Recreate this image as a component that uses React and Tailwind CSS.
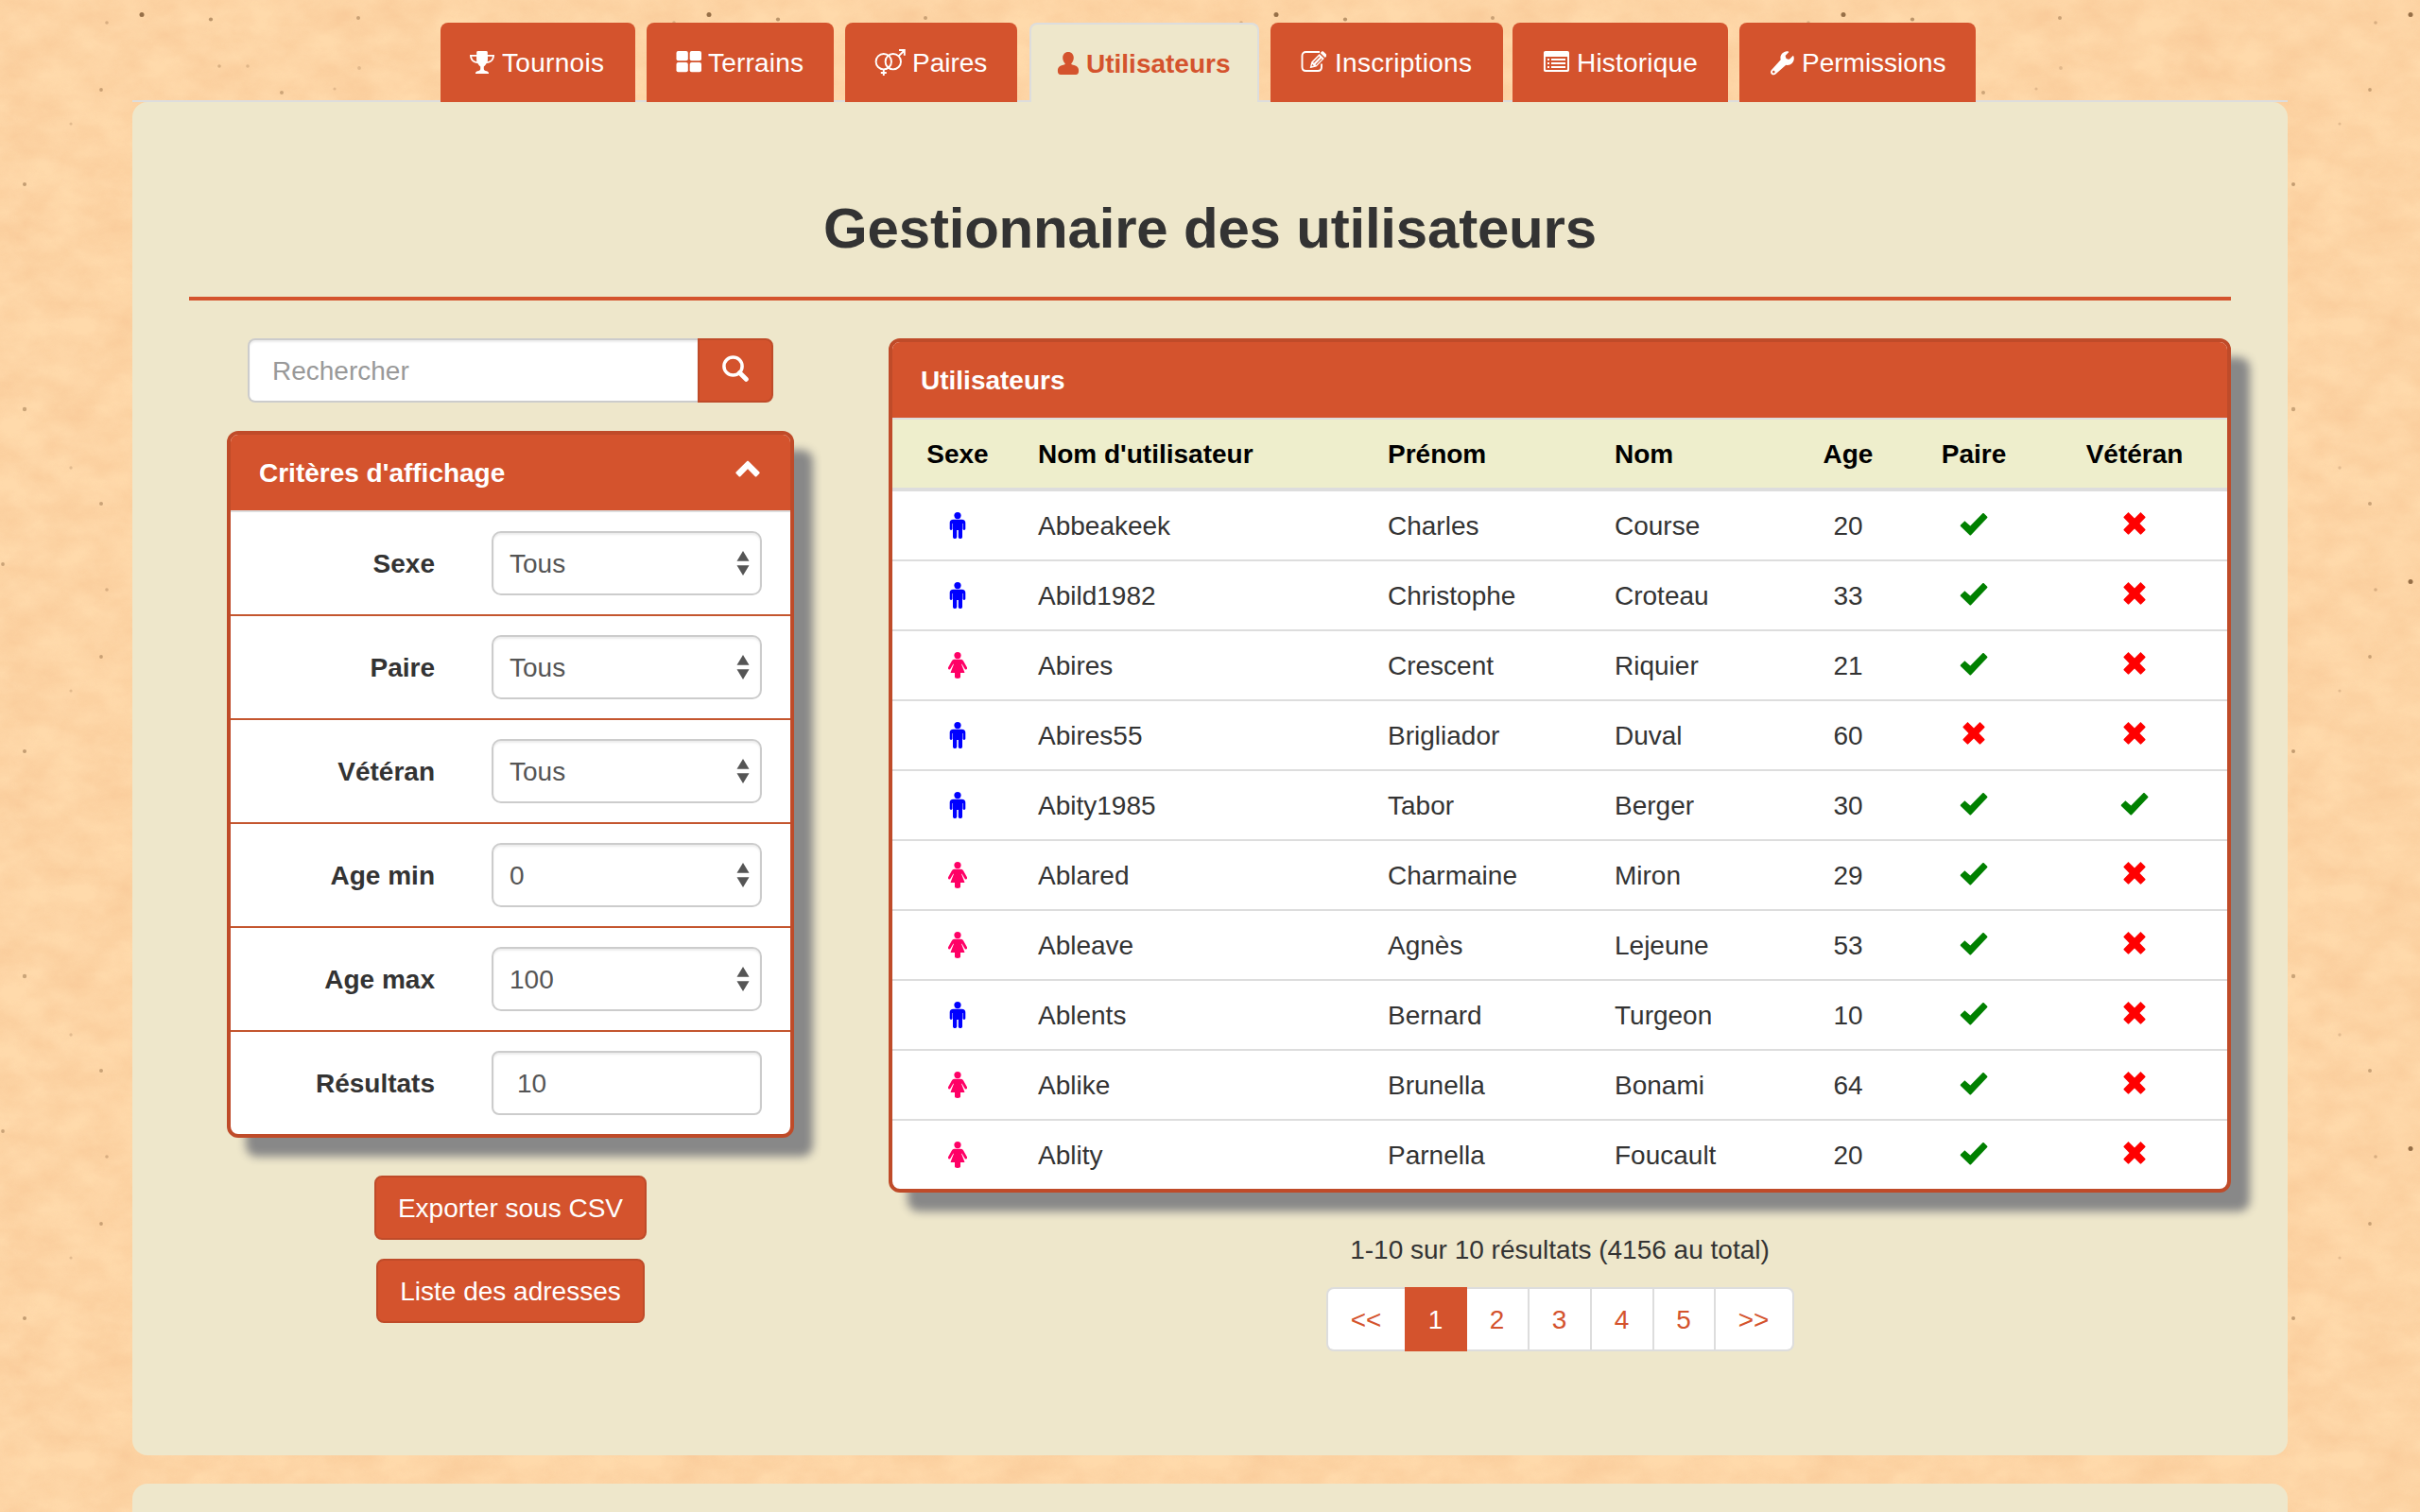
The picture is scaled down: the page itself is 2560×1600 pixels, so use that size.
import React from "react";

const Svg = ({ className, box, children }) => (
  <svg className={"block shrink-0 " + className} viewBox={box} fill="currentColor" aria-hidden="true">
    {children}
  </svg>
);

const Trophy = () => (
  <Svg className="h-7 w-7" box="0 0 28 28">
    <path d="M8.2 2.9C8.2 2.4 9.4 2 10.5 2h7c1.100 0 2.300.4 2.300.9V6h7.200c0 5.600-3.300 8.600-8.300 9.100-1 1.700-2.300 2.900-2.900 3.400v2.400c0 1.200 1.200 1.800 3.200 2.300 1.500.4 2 1.300 2 2.800H7c0-1.500.5-2.400 2-2.800 2-.5 3.200-1.100 3.200-2.300v-2.400c-.6-.5-1.900-1.700-2.900-3.400C4.300 14.600 1 11.600 1 6h7.200zM3 7.700c.4 3 2.200 5 5.300 5.500-.3-1.600-.3-3.600-.2-5.500zm22 0h-5.100c.1 1.900.1 3.900-.2 5.500 3.100-.5 4.900-2.500 5.300-5.500z" />
  </Svg>
);
const Grid = () => (
  <Svg className="h-7 w-7" box="0 0 28 28">
    <rect x="1.500" y="2" width="12.300" height="10.200" rx="2" />
    <rect x="15.700" y="2" width="12.300" height="10.200" rx="2" />
    <rect x="1.500" y="14" width="12.300" height="10.200" rx="2" />
    <rect x="15.700" y="14" width="12.300" height="10.200" rx="2" />
  </Svg>
);
const Couple = () => (
  <Svg className="h-7 w-[34px]" box="0 0 34 28">
    <g fill="none" stroke="currentColor" strokeWidth="1.900">
      <circle cx="10.800" cy="13.200" r="8.200" />
      <circle cx="20.800" cy="13.200" r="8.200" />
      <path d="M10.800 21.400V28M7.800 25h6M26.600 7.400 32 2M27 1h5.800v5.800" />
    </g>
  </Svg>
);
const User = () => (
  <Svg className="h-7 w-7" box="0 0 28 28">
    <path d="M15 2c3.500 0 5.800 2.700 5.800 6.100 0 2.300-.9 4.400-2.300 5.800-.4.500-.3 1 .3 1.300 1.600.6 3.600 1 5 1.900 1.600 1.100 2.300 2.700 2.300 4.900C26.100 24.900 25 26 23 26H7c-2 0-3.100-1.100-3.100-4 0-2.200.7-3.800 2.300-4.900 1.400-.9 3.400-1.300 5-1.900.6-.3.7-.8.3-1.300-1.400-1.400-2.300-3.500-2.300-5.800C9.200 4.700 11.500 2 15 2z" />
  </Svg>
);
const Edit = () => (
  <Svg className="h-7 w-7" box="0 0 28 28">
    <path fill="none" stroke="currentColor" strokeWidth="1.900" d="M21 3H6.500C4 3 2.500 4.500 2.500 7v12c0 2.500 1.500 4 4 4H19c2.500 0 4-1.500 4-4v-3.500" />
    <path d="M23.200 2.600c.5-.6 1.200-.6 1.700-.1l3.500 3.300c.5.500.5 1.100 0 1.600l-1.600 1.700-5.100-5z" />
    <path fillRule="evenodd" d="m20.700 5.100 5.100 4.900-8.300 8.600-6 1.500c-.6.100-.8-.2-.7-.7l1.500-6zm-.3 2.300-6.300 6.600.8.800 6.300-6.600zm2.400 2.300-6.300 6.600.7.700 6.300-6.600zM13.200 15.900l-.6 2.200 2.300-.6z" />
  </Svg>
);
const ListAlt = () => (
  <Svg className="h-7 w-7" box="0 0 28 28">
    <path fillRule="evenodd" d="M3 2h24c1.300 0 2 .7 2 2v18c0 1.300-.7 2-2 2H3c-1.300 0-2-.7-2-2V4c0-1.300.7-2 2-2zm0 6v13.300c0 .5.300.8.800.8h22.400c.5 0 .8-.3.800-.8V8z" transform="scale(.965 1)" />
    <path d="M5 10h2v2H5zM9 10h15v2H9zM5 14h2v2H5zM9 14h15v2H9zM5 18h2v2H5zM9 18h15v2H9z" />
  </Svg>
);
const Wrench = () => (
  <Svg className="h-7 w-7" box="0 0 28 28">
    <path fillRule="evenodd" d="M20.800 2.400c.6.200.6.700.2 1.100l-3 3c-.4.400-.4.800-.2 1.300l.8 2.100 2.200.8c.5.200.9.200 1.300-.2l3.100-3.100c.5-.5 1-.4 1.200.2.900 2.700.3 5.500-1.700 7.400-1.800 1.700-4.100 2.200-6.400 1.700L7.500 26.300c-1.200 1.300-3.200 1.300-4.500.1-1.300-1.300-1.200-3.200 0-4.500l9.700-10.700c-.7-2.400-.1-4.800 1.600-6.600 1.700-1.800 4-2.800 6.500-2.200zM5.300 22.800c-.8 0-1.300.6-1.300 1.300s.5 1.300 1.300 1.300 1.300-.6 1.300-1.300-.6-1.300-1.300-1.300z" />
  </Svg>
);
const Magnifier = () => (
  <Svg className="h-7 w-7" box="0 0 28 28">
    <circle cx="11.500" cy="11.500" r="9.600" fill="none" stroke="currentColor" strokeWidth="3.500" />
    <path d="m18.500 18.500 6.800 6.800" stroke="currentColor" strokeWidth="5" strokeLinecap="round" />
  </Svg>
);
const ChevronUp = () => (
  <Svg className="h-[18px] w-[26px]" box="0 0 26 18">
    <path d="M12.200 1c.5-.5 1.100-.5 1.600 0l11.600 11.600c.4.400.4.900 0 1.300l-3.100 3.300c-.5.500-1 .5-1.500 0L13 9.300l-7.800 7.900c-.5.500-1 .5-1.500 0L.6 13.900c-.4-.4-.4-.9 0-1.300z" />
  </Svg>
);
const Male = () => (
  <Svg className="mx-auto h-7 w-5 text-[#0000ff]" box="0 0 20 28">
    <circle cx="10" cy="3.600" r="3.600" />
    <path d="M5.500 7.800h9c2.500 0 3.800 1.300 3.800 3.500v6.200c0 .8-.6 1.400-1.400 1.400s-1.400-.6-1.400-1.400V12h-.5v14.200c0 1.100-.8 1.800-2.100 1.800s-2.100-.7-2.100-1.800V19h-1.600v7.200C9.200 27.300 8.400 28 7.100 28S5 27.300 5 26.200V12h-.5v5.500c0 .8-.6 1.400-1.400 1.400s-1.400-.6-1.400-1.400v-6.200c0-2.200 1.300-3.500 3.800-3.500z" />
  </Svg>
);
const Female = () => (
  <Svg className="mx-auto h-7 w-5 text-[#ff0066]" box="0 0 20 28">
    <circle cx="10" cy="3.600" r="3.600" />
    <path d="M7 7.800h6c1.500 0 2.500.6 3.300 2l3.500 6.300c.5.900.3 1.700-.4 2.100-.8.400-1.600.1-2-.7l-2.900-4.900-.4.300 3.200 8.300c.2.500 0 .9-.6.900H13v4.200c0 1.100-.9 1.700-3 1.700s-3-.6-3-1.700v-4.200H3.300c-.6 0-.8-.4-.6-.9l3.200-8.300-.4-.3-2.900 4.900c-.4.800-1.200 1.100-2 .7-.7-.4-.9-1.200-.4-2.100l3.500-6.300c.8-1.400 1.800-2 3.300-2z" />
  </Svg>
);
const Check = () => (
  <Svg className="mx-auto h-7 w-[30px] text-[#008000]" box="0 0 30 28">
    <path d="M24.300 1.200c.4-.4 1-.4 1.400 0l3.500 3.500c.4.400.4 1 0 1.400L12 24.200c-.4.400-1 .4-1.400 0L1 15c-.4-.4-.4-1 0-1.400l3.700-3.700c.4-.4 1-.4 1.400 0l5.200 4.700z" />
  </Svg>
);
const Cross = () => (
  <Svg className="mx-auto h-7 w-[30px] text-[#ff0000]" box="0 0 30 28">
    <path d="M7.800.7c.4-.5 1-.5 1.400 0L15 6.500 20.800.7c.4-.5 1-.5 1.400 0l4.100 4.100c.4.400.4.900 0 1.300L20.500 12l5.800 5.900c.4.400.4.900 0 1.300l-4.100 4.100c-.4.500-1 .5-1.400 0L15 17.500l-5.800 5.800c-.4.500-1 .5-1.400 0l-4.100-4.100c-.4-.4-.4-.9 0-1.300L9.500 12 3.700 6.100c-.4-.4-.4-.9 0-1.300z" />
  </Svg>
);

const specks = [
  [150, 15.500, 2.500, 0.700], [223, 20.500, 2.100, 0.450], [113, 24, 1.800, 0.250], [379, 19, 2, 0.350],
  [232, 70, 1.800, 0.250], [262, 70, 1.800, 0.200], [107, 95, 1.900, 0.350], [298, 98, 2, 0.320],
  [354, 94, 1.600, 0.180], [75, 131, 1.600, 0.180], [26, 195, 2, 0.400], [26, 433, 2.200, 0.350],
  [75, 495, 1.700, 0.180], [107, 533, 2, 0.350], [3, 597, 1.900, 0.350], [380, 72, 1.900, 0.180],
];

function Paper() {
  return (
    <svg className="absolute inset-0 -z-10 h-full w-full" aria-hidden="true">
      <defs>
        <filter id="fibres" x="0" y="0" width="100%" height="100%" colorInterpolationFilters="sRGB">
          <feTurbulence type="fractalNoise" baseFrequency="0.02 0.03" numOctaves="5" seed="7" stitchTiles="stitch" />
          <feColorMatrix values="0 0 0 0 0.940  0 0 0 0 0.690  0 0 0 0 0.480  0.900 0 0 0 -0.220" />
        </filter>
        <pattern id="paper" width="600" height="600" patternUnits="userSpaceOnUse">
          <rect width="600" height="600" fill="#ffdaab" />
          <rect width="600" height="600" filter="url(#fibres)" opacity="0.600" />
          {specks.map(([x, y, r, o], i) => (
            <circle key={i} cx={x} cy={y} r={r} fill="#6b4420" opacity={o} />
          ))}
        </pattern>
      </defs>
      <rect width="100%" height="100%" fill="url(#paper)" />
    </svg>
  );
}

const tabs = [
  { label: "Tournois", Icon: Trophy, cls: "w-[206px] pl-[30px] gap-[7px] tracking-[0.3px]" },
  { label: "Terrains", Icon: Grid, cls: "ml-3 w-[198px] pl-[30px] gap-[7px] tracking-[0.2px]" },
  { label: "Paires", Icon: Couple, cls: "ml-3 w-[182px] pl-[30px] gap-[7px]" },
  { label: "Utilisateurs", Icon: User, cls: "ml-[13px] w-[243px] pl-[24px] gap-[6px]", active: true },
  { label: "Inscriptions", Icon: Edit, cls: "ml-3 w-[246px] pl-[31px] gap-[9px] tracking-[0.3px]" },
  { label: "Historique", Icon: ListAlt, cls: "ml-2.5 w-[228px] pl-[32px] gap-[8px] tracking-[0.2px]" },
  { label: "Permissions", Icon: Wrench, cls: "ml-3 w-[250px] pl-[31px] gap-[7px]" },
];

const criteria = [
  ["Sexe", "Tous"],
  ["Paire", "Tous"],
  ["Vétéran", "Tous"],
  ["Age min", "0"],
  ["Age max", "100"],
];

const users = [
  ["m", "Abbeakeek", "Charles", "Course", 20, true, false],
  ["m", "Abild1982", "Christophe", "Croteau", 33, true, false],
  ["f", "Abires", "Crescent", "Riquier", 21, true, false],
  ["m", "Abires55", "Brigliador", "Duval", 60, false, false],
  ["m", "Abity1985", "Tabor", "Berger", 30, true, true],
  ["f", "Ablared", "Charmaine", "Miron", 29, true, false],
  ["f", "Ableave", "Agnès", "Lejeune", 53, true, false],
  ["m", "Ablents", "Bernard", "Turgeon", 10, true, false],
  ["f", "Ablike", "Brunella", "Bonami", 64, true, false],
  ["f", "Ablity", "Parnella", "Foucault", 20, true, false],
];

const pages = [
  ["<<", "w-[83px]"], ["1", "w-[66px]"], ["2", "w-[66px]"], ["3", "w-[66px]"],
  ["4", "w-[66px]"], ["5", "w-[65px]"], [">>", "w-[83px]"],
];

const panel = "overflow-hidden rounded-xl border-4 border-[#bf4b29] bg-white shadow-[20px_20px_10px_#888888]";
const panelHead = "flex h-[82px] items-center border-b-2 border-[#dddddd] bg-[#d4532d] font-bold text-white";
const field = "h-[68px] w-[286px] border-2 border-[#cccccc] bg-white text-[#555555] shadow-[inset_0_2px_2px_rgba(0,0,0,0.075)]";
const rowGrid = "grid grid-cols-[138px_370px_240px_202px_122px_144px_196px] items-center";
const cell = "pl-4 pt-px";
const midCell = "pt-px text-center";
const button = "flex h-[68px] items-center justify-center rounded-lg border-2 border-[#bf4b29] bg-[#d4532d] pt-px text-white";

function CriteriaRow({ label, children }) {
  return (
    <label className="flex h-[110px] items-center justify-end gap-[60px] border-b-2 border-[#c4562f] pr-[30px] last:h-[108px] last:border-b-0">
      <span className="pt-px font-bold">{label}</span>
      {children}
    </label>
  );
}

function Filters() {
  return (
    <aside className="w-[600px]">
      <div className="ml-[22px] flex h-[68px] w-[556px]">
        <input
          className="w-[476px] rounded-l-lg border-2 border-r-0 border-[#cccccc] bg-white pl-6 pt-px shadow-[inset_0_2px_2px_rgba(0,0,0,0.075)] placeholder:text-[#999999] placeholder:opacity-100"
          placeholder="Rechercher"
        />
        <button className="flex w-20 items-center justify-center rounded-r-lg border-2 border-[#bf4b29] bg-[#d4532d] pb-1 text-white">
          <Magnifier />
        </button>
      </div>
      <section className={"mt-[30px] " + panel}>
        <header className={panelHead + " justify-between pl-[30px] pr-[32px]"}>
          <span className="pt-px">Critères d'affichage</span>
          <span className="pb-2"><ChevronUp /></span>
        </header>
        {criteria.map(([label, value]) => (
          <CriteriaRow key={label} label={label}>
            <span className={field + " flex items-center justify-between rounded-[10px] pl-[17px] pr-[11px]"}>
              <span className="pt-px">{value}</span>
              <Svg className="h-[26px] w-3.5" box="0 0 14 26">
                <path d="M7 0l6.500 10.800H.5zM7 26l6.500-10.800H.5z" />
              </Svg>
            </span>
          </CriteriaRow>
        ))}
        <CriteriaRow label="Résultats">
          <input className={field + " rounded-lg pl-[25px] pt-px"} defaultValue="10" />
        </CriteriaRow>
      </section>
      <div className="mt-10 flex flex-col items-center gap-5">
        <button className={button + " w-[288px]"}>Exporter sous CSV</button>
        <button className={button + " w-[284px]"}>Liste des adresses</button>
      </div>
    </aside>
  );
}

function UserTable() {
  return (
    <div className="flex w-[1420px] flex-col items-center">
      <section className={"w-full " + panel}>
        <header className={panelHead + " pl-[30px] pt-px"}>Utilisateurs</header>
        <div className={rowGrid + " h-[76px] border-b-4 border-[#dddddd] bg-[#eeeecc] font-bold text-black"}>
          <span className={midCell}>Sexe</span>
          <span className={cell}>Nom d'utilisateur</span>
          <span className={cell}>Prénom</span>
          <span className={cell}>Nom</span>
          <span className={midCell}>Age</span>
          <span className={midCell}>Paire</span>
          <span className={midCell}>Vétéran</span>
        </div>
        {users.map(([sex, login, first, last, age, pair, veteran]) => (
          <div key={login} className={rowGrid + " h-[74px] border-b-2 border-[#dddddd] last:h-[72px] last:border-b-0"}>
            {sex === "m" ? <Male /> : <Female />}
            <span className={cell}>{login}</span>
            <span className={cell}>{first}</span>
            <span className={cell}>{last}</span>
            <span className={midCell}>{age}</span>
            {pair ? <Check /> : <Cross />}
            {veteran ? <Check /> : <Cross />}
          </div>
        ))}
      </section>
      <p className="mt-[41px]">1-10 sur 10 résultats (4156 au total)</p>
      <nav className="mt-[19px] flex h-[68px]">
        {pages.map(([label, width]) => (
          <a
            key={label}
            className={
              "flex items-center justify-center border-y-2 pt-px " + width +
              (label === "1"
                ? " border-[#d4532d] bg-[#d4532d] text-white"
                : " border-[#dddddd] bg-white text-[#d4532d]" +
                  (label === "<<" ? " rounded-l-lg border-l-2" : label === ">>" ? " rounded-r-lg border-r-2" : " border-r-2"))
            }
          >
            {label}
          </a>
        ))}
      </nav>
    </div>
  );
}

export default function App() {
  return (
    <div className="relative isolate h-[1600px] w-[2560px] overflow-hidden font-['Liberation_Sans',Arial,sans-serif] text-[28px] leading-10 text-[#333333]">
      <Paper />
      <div className="mx-auto w-[2280px]">
        <nav className="flex h-[108px] items-end border-b-2 border-[#dddddd] pl-[326px]">
          {tabs.map(({ label, Icon, cls, active }) => (
            <a
              key={label}
              className={
                "-mb-0.5 flex h-[84px] shrink-0 items-center rounded-t-lg " + cls +
                (active
                  ? " border-2 border-b-0 border-[#dddddd] bg-[#eee7cb] font-bold text-[#d4532d]"
                  : " bg-[#d4532d] text-white")
              }
            >
              <Icon />
              <span className="pt-px">{label}</span>
            </a>
          ))}
        </nav>
        <main className="h-[1432px] rounded-2xl bg-[#eee7cb] px-[60px] pt-[98px]">
          <h1 className="text-center text-[60px] font-bold leading-[72px] tracking-[-0.2px]">Gestionnaire des utilisateurs</h1>
          <hr className="mt-[36px] border-t-4 border-[#d4532d]" />
          <div className="mt-10 flex justify-between pl-10">
            <Filters />
            <UserTable />
          </div>
        </main>
        <footer className="mt-[30px] h-20 rounded-2xl bg-[#eee7cb]" />
      </div>
    </div>
  );
}
